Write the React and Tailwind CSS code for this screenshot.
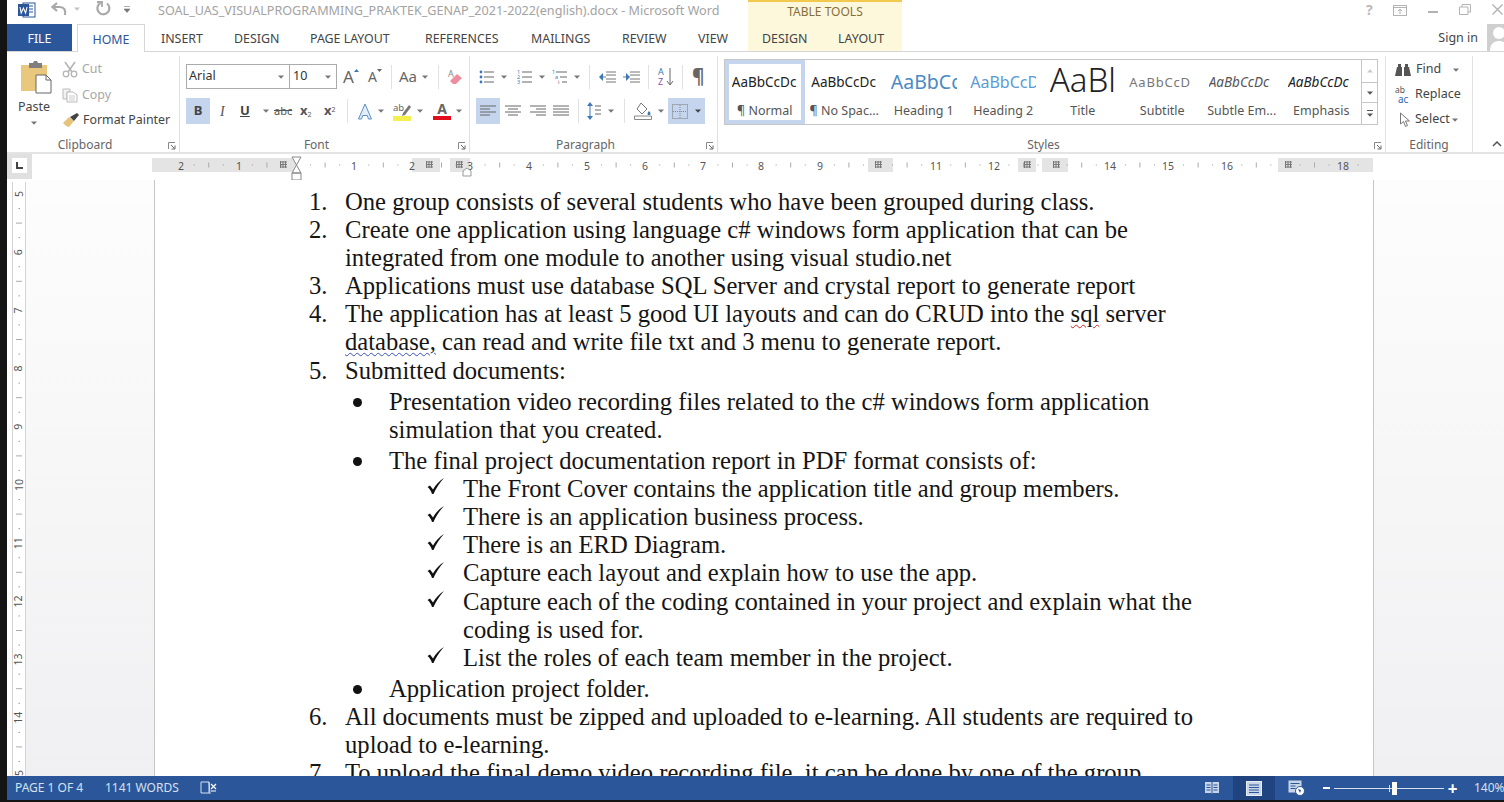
import React from "react";

const FONT = '"Noto Sans", "Open Sans", sans-serif';

function Caret({ className = "", color = "#777" }) {
  return (
    <svg width="6" height="4" viewBox="0 0 6 4" className={className}>
      <path d="M0 0.5h6L3 3.8z" fill={color} />
    </svg>
  );
}

function Sep({ className = "" }) {
  return <div className={`w-px h-[24px] bg-[#e1e1e1] shrink-0 ${className}`} />;
}

function Launcher() {
  return (
    <svg width="8" height="8" viewBox="0 0 8 8">
      <path d="M0.5 7V0.5H7" fill="none" stroke="#888" />
      <path d="M3 3l3.5 3.5M7 3.5V7H3.5" fill="none" stroke="#666" />
    </svg>
  );
}

function Lines({ rows, w = 15, color = "#666" }) {
  return (
    <svg width={w} height="14" viewBox={`0 0 ${w} 14`} className="block">
      {rows.map((r, i) => (
        <path key={i} d={`M${r[0]} ${r[2]}H${r[1]}`} stroke={color} strokeWidth="1" />
      ))}
    </svg>
  );
}

const TitleBar = () => (
  <div className="h-[24px] flex bg-white shrink-0">
    <div className="w-[741px] flex items-center h-[22px] shrink-0">
      <svg width="18" height="16" viewBox="0 0 18 16" className="ml-[11px] shrink-0 mt-[-3px]">
        <rect x="5" y="1" width="12" height="14" fill="#fff" stroke="#2b579a" />
        <path d="M11 4h4M11 7h4M11 10h4" stroke="#2b579a" />
        <rect x="0" y="2" width="11" height="12" fill="#2b579a" />
        <path d="M2 5l1.200 6L5.400 6l2.200 5L9 5" fill="none" stroke="#fff" strokeWidth="1.100" />
      </svg>
      <svg width="17" height="15" viewBox="0 0 17 15" className="ml-[15px] shrink-0 mt-[-4px]">
        <path d="M6 1L1.500 5 6 9" fill="none" stroke="#a9a9a9" strokeWidth="2.200" />
        <path d="M2 5h7c4 0 6 3 5 8" fill="none" stroke="#a9a9a9" strokeWidth="2.200" />
      </svg>
      <Caret className="ml-[6px] mt-[-4px]" color="#c4c4c4" />
      <svg width="16" height="16" viewBox="0 0 16 16" className="ml-[15px] shrink-0 mt-[-4px]">
        <path d="M12 2.500a6 6 0 1 1-6.500-.5" fill="none" stroke="#a9a9a9" strokeWidth="2.200" />
        <path d="M2 1h5v5" fill="none" stroke="#a9a9a9" strokeWidth="1.800" />
      </svg>
      <svg width="6" height="7" viewBox="0 0 6 7" className="ml-[13px] shrink-0 mt-[-3px]">
        <path d="M0 .5h6M0 3h6l-3 3.500z" fill="#777" stroke="#777" strokeWidth=".6" />
      </svg>
      <span className="ml-[28px] text-[12.600px] text-[#a3a3a3] whitespace-nowrap">
        SOAL_UAS_VISUALPROGRAMMING_PRAKTEK_GENAP_2021-2022(english).docx - Microsoft Word
      </span>
    </div>
    <div className="w-[154px] shrink-0 bg-[#fdf7dc] border-t-2 border-[#f2c94c] text-center text-[12px] leading-[20px] text-[#86703a]">
      TABLE TOOLS
    </div>
    <div className="flex-1 flex items-start relative h-[20px]">
      <span className="ml-[464px] mt-[1px] text-[14px] leading-[18px] font-bold text-[#b9b9b9]">?</span>
      <svg width="14" height="11" viewBox="0 0 14 11" className="ml-[20px] mt-[5px] shrink-0">
        <rect x=".5" y=".5" width="13" height="10" fill="none" stroke="#b3b3b3" />
        <path d="M.5 2.500h13M7 9V4.500M5 6l2-2 2 2" fill="none" stroke="#b3b3b3" />
      </svg>
      <div className="ml-[21px] mt-[11px] w-[10px] h-[1.500px] bg-[#b3b3b3]" />
      <svg width="12" height="11" viewBox="0 0 12 11" className="ml-[21px] mt-[4px] shrink-0">
        <path d="M.5 3h8.500v7.500h-8.500zM3 3V.5h8.500V8H9" fill="none" stroke="#b3b3b3" />
      </svg>
      <svg width="11" height="11" viewBox="0 0 11 11" className="ml-[21px] mt-[4px] shrink-0">
        <path d="M.5.5l10 10M10.500.5l-10 10" stroke="#b3b3b3" strokeWidth="1.400" />
      </svg>
    </div>
  </div>
);

const TabBar = () => (
  <div className="h-[28px] flex bg-white border-b border-[#d6d6d6] shrink-0 text-[12.400px] text-[#444] items-stretch relative">
    <div className="w-[65px] h-[27px] pt-[3px] bg-[#2b579a] text-white flex items-center justify-center shrink-0">FILE</div>
    <div className="ml-[5px] w-[68px] h-[28px] pt-[3px] bg-white border-x border-t border-[#d6d6d6] text-[#2b579a] flex items-center justify-center shrink-0 relative z-10">
      HOME
    </div>
    <div className="ml-[16px] w-[73px] pt-[3px] flex items-center shrink-0">INSERT</div>
    <div className="w-[76px] pt-[3px] flex items-center shrink-0">DESIGN</div>
    <div className="w-[115px] pt-[3px] flex items-center shrink-0">PAGE LAYOUT</div>
    <div className="w-[106px] pt-[3px] flex items-center shrink-0">REFERENCES</div>
    <div className="w-[91px] pt-[3px] flex items-center shrink-0">MAILINGS</div>
    <div className="w-[76px] pt-[3px] flex items-center shrink-0">REVIEW</div>
    <div className="w-[50px] pt-[3px] flex items-center shrink-0">VIEW</div>
    <div className="w-[154px] pt-[3px] flex items-center bg-[#fdf7dc] shrink-0">
      <span className="ml-[14px] w-[76px]">DESIGN</span>
      <span>LAYOUT</span>
    </div>
    <div className="flex-1 flex justify-end items-center">
      <span className="text-[12.500px] text-[#444] mr-[9px] pt-[2px]">Sign in</span>
      <svg width="17" height="27" viewBox="0 0 17 27" className="shrink-0">
        <rect width="17" height="27" fill="#cfcfcf" />
        <circle cx="12" cy="9" r="6" fill="#fff" />
        <path d="M3 27c0-8 5-10 9-10s9 2 9 10z" fill="#fff" />
      </svg>
    </div>
  </div>
);

const Group = ({ w, label, launcher, children, border = true }) => (
  <div className={`${w} shrink-0 flex flex-col relative ${border ? "border-r border-[#e1e1e1]" : ""} h-[96px] mt-[4px]`}>
    <div className="h-[82px] shrink-0 relative flex flex-col">{children}</div>
    <div className={`flex-1 text-[12px] leading-[15px] text-[#666] text-center mt-[-1px] ${launcher ? "pr-[16px]" : ""}`}>
      {label}
    </div>
    {launcher && (
      <div className="absolute right-[3px] bottom-[2px] leading-none flex">
        <Launcher />
      </div>
    )}
  </div>
);

const Clipboard = () => (
  <Group w="w-[173px]" label="Clipboard" launcher>
    <div className="flex pt-[4px] pl-[5px]">
      <div className="w-[44px] flex flex-col items-center shrink-0">
        <svg width="32" height="34" viewBox="0 0 32 34" className="ml-[4px]">
          <path d="M1 5h26v26H1z" fill="#e9c77d" />
          <path d="M9 3h4l1-2h3l1 2h4v5H9z" fill="#7f7f7f" />
          <path d="M16 15h10l5 5v13H16z" fill="#fff" stroke="#666" />
          <path d="M26 15v5h5" fill="none" stroke="#666" />
        </svg>
        <span className="text-[12.500px] leading-[16px] mt-[5px] text-[#444]">Paste</span>
        <Caret className="mt-[6px]" />
      </div>
      <div className="flex flex-col ml-[6px] mt-[-3px]">
        <div className="flex items-center h-[25.500px] text-[12.400px] text-[#a8a8a8]">
          <svg width="16" height="17" viewBox="0 0 16 17" className="shrink-0">
            <path d="M3 1l7 10M13 1L6 11" stroke="#b5b5b5" strokeWidth="1.600" />
            <circle cx="4" cy="13" r="2.800" fill="none" stroke="#b5b5b5" strokeWidth="1.300" />
            <circle cx="12" cy="13" r="2.800" fill="none" stroke="#b5b5b5" strokeWidth="1.300" />
          </svg>
          <span className="ml-[4px]">Cut</span>
        </div>
        <div className="flex items-center h-[25.500px] text-[12.400px] text-[#a8a8a8]">
          <svg width="16" height="15" viewBox="0 0 16 15" className="shrink-0">
            <path d="M1 1h7v3H5v7H1z" fill="#f2f2f2" stroke="#bbb" />
            <path d="M5 4h6l4 3v7H5z" fill="#fff" stroke="#bbb" />
            <path d="M7 8h6M7 10h6M7 12h6" stroke="#ccc" />
          </svg>
          <span className="ml-[4px]">Copy</span>
        </div>
        <div className="flex items-center h-[25.500px] text-[12.400px] text-[#444]">
          <svg width="18" height="15" viewBox="0 0 18 15" className="shrink-0">
            <path d="M1 10l6-6 5 4-5 6c-2 0-4-2-6-4z" fill="#e6c37a" />
            <path d="M8 4l4 4 5-6-2-2z" fill="#444" />
          </svg>
          <span className="ml-[3px]">Format Painter</span>
        </div>
      </div>
    </div>
  </Group>
);

const Font = () => (
  <Group w="w-[290px]" label="Font" launcher>
    <div className="flex items-center pl-[6px] mt-[8px] h-[25px]">
      <div className="w-[104px] h-[25px] border border-[#ababab] text-[12.500px] text-[#333] flex items-center justify-between pl-[2px] pr-[5px] shrink-0">
        <span>Arial</span>
        <Caret />
      </div>
      <div className="w-[47px] h-[25px] border border-l-0 border-[#ababab] text-[12.500px] text-[#333] flex items-center justify-between pl-[3px] pr-[5px] shrink-0">
        <span>10</span>
        <Caret />
      </div>
      <div className="ml-[6px] w-[25px] flex items-start text-[17px] leading-[20px] text-[#666] relative">
        A
        <svg width="5" height="3" viewBox="0 0 5 3" className="mt-[2px]"><path d="M0 3h5L2.500 0z" fill="#3b78b5" /></svg>
      </div>
      <div className="w-[22px] flex items-start text-[14px] leading-[20px] text-[#666]">
        A
        <svg width="5" height="3" viewBox="0 0 5 3" className="mt-[2px]"><path d="M0 0h5L2.500 3z" fill="#666" /></svg>
      </div>
      <Sep className="ml-[1px]" />
      <span className="ml-[7px] text-[15px] text-[#666]">Aa</span>
      <Caret className="ml-[5px]" />
      <Sep className="ml-[10px]" />
      <svg width="16" height="16" viewBox="0 0 16 16" className="ml-[8px] shrink-0">
        <text x="1" y="8" fontSize="9" fill="#888" fontFamily={FONT}>A</text>
        <path d="M3 12l7-7 5 4-6 6H6z" fill="#ef8da0" />
      </svg>
    </div>
    <div className="flex items-center pl-[6px] mt-[9px] h-[26px]">
      <div className="w-[24px] h-[26px] bg-[#c5d5ee] flex items-center justify-center text-[13px] font-bold text-[#444] shrink-0">B</div>
      <span className="ml-[10px] w-[16px] text-[14px] italic text-[#555]" style={{ fontFamily: '"Liberation Serif", serif' }}>I</span>
      <span className="ml-[4px] w-[13px] text-[13px] font-bold underline text-[#444]">U</span>
      <Caret className="ml-[10px]" />
      <span className="ml-[5px] w-[26px] text-[11px] text-[#555] line-through">abc</span>
      <span className="w-[24px] text-[13px] font-bold text-[#555] whitespace-nowrap">x<sub className="text-[7px] font-normal">2</sub></span>
      <span className="w-[24px] text-[13px] font-bold text-[#555] whitespace-nowrap">x<sup className="text-[7px] font-normal">2</sup></span>
      <Sep className="ml-[-1px]" />
      <svg width="16" height="17" viewBox="0 0 16 17" className="ml-[9px] shrink-0">
        <path d="M8 1L1.500 16h3l1.200-3.500h4.600L11.500 16h3z" fill="#e4eef8" stroke="#5b8fc7" />
      </svg>
      <Caret className="ml-[5px]" />
      <svg width="18" height="19" viewBox="0 0 18 19" className="ml-[9px] shrink-0">
        <text x="0" y="9" fontSize="9.500" fill="#666" fontFamily={FONT}>ab</text>
        <path d="M10 11l6-8 2 2-6 8-3 1z" fill="#777" />
        <rect x="0" y="14" width="18" height="5" fill="#f4ee4e" />
      </svg>
      <Caret className="ml-[6px]" />
      <div className="ml-[10px] w-[18px] flex flex-col items-center shrink-0">
        <span className="text-[14px] leading-[13px] text-[#666] font-bold">A</span>
        <div className="w-[18px] h-[4px] mt-[1px] bg-[#e00d1c]" />
      </div>
      <Caret className="ml-[5px]" />
    </div>
  </Group>
);

const NumList = () => (
  <svg width="15" height="16" viewBox="0 0 15 16" className="block">
    <text x="0" y="5" fontSize="5.500" fill="#3b78b5" fontFamily={FONT}>1</text>
    <text x="0" y="10" fontSize="5.500" fill="#3b78b5" fontFamily={FONT}>2</text>
    <text x="0" y="15" fontSize="5.500" fill="#3b78b5" fontFamily={FONT}>3</text>
    <path d="M5 3h10M5 8h10M5 13h10" stroke="#666" />
  </svg>
);
const BulList = () => (
  <svg width="15" height="16" viewBox="0 0 15 16" className="block">
    <circle cx="2" cy="3" r="1.400" fill="#3b78b5" />
    <circle cx="2" cy="8" r="1.400" fill="#3b78b5" />
    <circle cx="2" cy="13" r="1.400" fill="#3b78b5" />
    <path d="M5 3h10M5 8h10M5 13h10" stroke="#666" />
  </svg>
);
const MultiList = () => (
  <svg width="15" height="16" viewBox="0 0 15 16" className="block">
    <text x="0" y="5" fontSize="5.500" fill="#3b78b5" fontFamily={FONT}>1</text>
    <text x="3" y="10" fontSize="5.500" fill="#3b78b5" fontFamily={FONT}>a</text>
    <text x="6" y="15" fontSize="5.500" fill="#666" fontFamily={FONT}>i</text>
    <path d="M4 3h11M8 8h7M10 13h5" stroke="#666" />
  </svg>
);

const Para = () => (
  <Group w="w-[248px]" label="Paragraph" launcher>
    <div className="flex items-center pl-[9px] mt-[8px] h-[25px]">
      <BulList />
      <Caret className="ml-[7px]" />
      <div className="ml-[10px]"><NumList /></div>
      <Caret className="ml-[7px]" />
      <div className="ml-[7px]"><MultiList /></div>
      <Caret className="ml-[7px]" />
      <Sep className="ml-[9px]" />
      <svg width="18" height="14" viewBox="0 0 18 14" className="ml-[8px] shrink-0">
        <path d="M8 2h10M8 5h10M8 9h10M8 12h10M8 7H2" stroke="#777" />
        <path d="M5 3L1 7l4 4z" fill="#3b78b5" />
      </svg>
      <svg width="18" height="14" viewBox="0 0 18 14" className="ml-[6px] shrink-0">
        <path d="M8 2h10M8 5h10M8 9h10M8 12h10M1 7h5" stroke="#777" />
        <path d="M4 3l4 4-4 4z" fill="#3b78b5" />
      </svg>
      <Sep className="ml-[8px]" />
      <svg width="17" height="20" viewBox="0 0 17 20" className="ml-[9px] shrink-0">
        <text x="0" y="8" fontSize="9" fill="#3b78b5" fontFamily={FONT}>A</text>
        <text x="0" y="18" fontSize="9" fill="#8a52a6" fontFamily={FONT}>Z</text>
        <path d="M12 1v16M9 14l3 4 3-4" fill="none" stroke="#666" />
      </svg>
      <Sep className="ml-[7px]" />
      <span className="ml-[9px] text-[19px] font-bold text-[#666] leading-none">¶</span>
    </div>
    <div className="flex items-center pl-[6px] mt-[9px] h-[26px]">
      <div className="w-[24px] h-[26px] bg-[#c5d5ee] flex items-center justify-center shrink-0">
        <Lines w={16} rows={[[0, 16, 2], [0, 10, 5], [0, 16, 8], [0, 10, 11]]} />
      </div>
      <div className="ml-[5px]"><Lines w={16} rows={[[0, 16, 2], [3, 13, 5], [0, 16, 8], [3, 13, 11]]} /></div>
      <div className="ml-[7px]"><Lines w={18} rows={[[2, 18, 2], [8, 18, 5], [2, 18, 8], [8, 18, 11]]} /></div>
      <div className="ml-[6px]"><Lines w={18} rows={[[1, 17, 2], [1, 17, 5], [1, 17, 8], [1, 17, 11]]} /></div>
      <Sep className="ml-[8px]" />
      <svg width="14" height="20" viewBox="0 0 14 20" className="ml-[8px] shrink-0">
        <path d="M3 3v14" stroke="#3b78b5" />
        <path d="M0 5l3-4 3 4zM0 15l3 4 3-4z" fill="#3b78b5" />
        <path d="M8 5h6M8 9h6M8 13h6" stroke="#666" />
      </svg>
      <Caret className="ml-[7px]" />
      <Sep className="ml-[10px]" />
      <svg width="18" height="18" viewBox="0 0 18 18" className="ml-[9px] shrink-0">
        <path d="M7 1l6 6-5 5-5-5z" fill="#fff" stroke="#777" />
        <path d="M15 9c2 2 2 4 0 4s-2-2 0-4z" fill="#3b78b5" />
        <path d="M.5 14h17v3.500H.5z" fill="#fff" stroke="#888" />
      </svg>
      <Caret className="ml-[6px]" />
      <div className="ml-[4px] w-[37px] h-[26px] bg-[#c5d5ee] flex items-center shrink-0">
        <svg width="16" height="15" viewBox="0 0 16 15" className="ml-[4px] shrink-0">
          <rect x=".5" y=".5" width="15" height="14" fill="none" stroke="#777" strokeDasharray="1 1" />
          <path d="M8 1v13M1 7.500h14" stroke="#888" strokeDasharray="1 1" />
        </svg>
        <Caret className="ml-[7px]" color="#444" />
      </div>
    </div>
  </Group>
);

const styles = [
  ["AaBbCcDc", "¶ Normal", "leading-[36px] text-[13.500px] text-[#222]", true],
  ["AaBbCcDc", "¶ No Spac...", "leading-[36px] text-[13.500px] text-[#222]"],
  ["AaBbCc", "Heading 1", "leading-[36px] text-[19.500px] text-[#4b8bc4]"],
  ["AaBbCcD", "Heading 2", "leading-[36px] text-[16px] text-[#5b9bd5]"],
  ["AaBl", "Title", "leading-[32px] text-[33px] text-[#222] font-light"],
  ["AaBbCcD", "Subtitle", "leading-[36px] text-[13px] tracking-[0.8px] text-[#777]"],
  ["AaBbCcDc", "Subtle Em...", "leading-[36px] text-[13.500px] italic text-[#555]"],
  ["AaBbCcDc", "Emphasis", "leading-[36px] text-[13.500px] italic text-[#222]"],
];

const Styles = () => (
  <Group w="w-[668px]" label="Styles" launcher>
    <div className="mt-[3px] ml-[6px] w-[654px] h-[66px] border border-[#c6c6c6] flex">
      {styles.map(([p, l, c, sel], i) => (
        <div
          key={i}
          className={`w-[79.500px] shrink-0 h-[64px] flex flex-col items-center ${sel ? "border-[4px] border-[#c5d5ee]" : "border-[4px] border-transparent"}`}
        >
          <div className={`h-[38px] w-[66px] overflow-hidden whitespace-nowrap ${c}`}>{p}</div>
          <div className="text-[12.500px] leading-[16px] mt-[1px] text-[#555] whitespace-nowrap">{l}</div>
        </div>
      ))}
      <div className="flex-1 border-l border-[#c6c6c6] flex flex-col">
        <div className="h-[23px] flex items-center justify-center border-b border-[#c6c6c6]">
          <svg width="6" height="4" viewBox="0 0 6 4"><path d="M0 3.500h6L3 .2z" fill="#c9c9c9" /></svg>
        </div>
        <div className="h-[20px] flex items-center justify-center border-b border-[#c6c6c6]"><Caret color="#555" /></div>
        <div className="flex-1 flex flex-col items-center justify-center gap-[2px]">
          <div className="w-[6px] h-px bg-[#555]" />
          <Caret color="#555" />
        </div>
      </div>
    </div>
  </Group>
);

const Editing = () => (
  <Group w="w-[87px]" label="Editing">
    <div className="flex flex-col pl-[8px] text-[12.500px] text-[#444]">
      <div className="flex items-center h-[25px] mt-[1px]">
        <svg width="18" height="15" viewBox="0 0 18 15" className="shrink-0">
          <path d="M1 14l2-9h5v9zM10 14V5h5l2 9z" fill="#555" />
          <path d="M4 2h3v3H4zM11 2h3v3h-3z" fill="#555" />
        </svg>
        <span className="ml-[4px]">Find</span>
        <Caret className="ml-[12px]" />
      </div>
      <div className="flex items-center h-[25px]">
        <svg width="18" height="18" viewBox="0 0 18 18" className="shrink-0">
          <text x="1" y="7" fontSize="8.500" fill="#555" fontFamily={FONT}>ab</text>
          <text x="4" y="17" fontSize="10" fill="#2b6cb0" fontFamily={FONT}>ac</text>
        </svg>
        <span className="ml-[3px]">Replace</span>
      </div>
      <div className="flex items-center h-[25px]">
        <svg width="13" height="16" viewBox="0 0 13 16" className="ml-[5px] shrink-0">
          <path d="M1.500 1v11l3-2.500 2 5 2-1-2-4.500h4z" fill="#fff" stroke="#777" />
        </svg>
        <span className="ml-[3px]">Select</span>
        <Caret className="ml-[2px]" />
      </div>
    </div>
  </Group>
);

const Ribbon = () => (
  <div className="h-[102px] flex bg-white border-b-2 border-[#e4e4e4] shrink-0 relative">
    <Clipboard />
    <Font />
    <Para />
    <Styles />
    <Editing />
    <svg width="10" height="6" viewBox="0 0 10 6" className="ml-[19px] mt-[89px] shrink-0">
      <path d="M1 5l4-4 4 4" fill="none" stroke="#555" strokeWidth="1.500" />
    </svg>
  </div>
);

const hNums = [
  [181, "2"], [239, "1"], [354, "1"], [412, "2"], [470, "3"], [529, "4"], [587, "5"], [645, "6"], [703, "7"],
  [761, "8"], [820, "9"], [936, "11"], [994, "12"], [1110, "14"], [1168, "15"], [1227, "16"], [1343, "18"],
];
const hMarks = [283, 429, 459, 878, 1027, 1056, 1288];

const HRuler = () => {
  const ticks = [];
  for (let i = -8; i < 74; i++) {
    if (i % 4 === 0) continue;
    const x = 296 + i * 14.55 - 152;
    if (x < 4 || x > 1218) continue;
    ticks.push(
      i % 2 === 0 ? (
        <path key={i} d={`M${x} 8.500v5`} stroke="#aaa" />
      ) : (
        <path key={i} d={`M${x} 10.500v1`} stroke="#999" />
      )
    );
  }
  return (
    <svg width="1222" height="26" viewBox="0 0 1222 26" className="shrink-0 block">
      <rect x="0" y="4" width="1221" height="14" fill="#e4e4e4" />
      <rect x="144" y="4" width="116" height="14" fill="#fff" />
      <rect x="288" y="4" width="10" height="14" fill="#fff" />
      <rect x="318" y="4" width="398" height="14" fill="#fff" />
      <rect x="741" y="4" width="125" height="14" fill="#fff" />
      <rect x="884" y="4" width="6" height="14" fill="#fff" />
      <rect x="916" y="4" width="210" height="14" fill="#fff" />
      {ticks}
      {hNums.map(([x, t]) => (
        <text key={x} x={x - 152} y="16" textAnchor="middle" fontSize="10.500" fill="#555" fontFamily={FONT}>{t}</text>
      ))}
      {hMarks.map((x) => (
        <g key={x} stroke="#777">
          <path d={`M${x - 152 - 3} 8h7M${x - 152 - 3} 10.500h7M${x - 152 - 3} 13h7`} />
          <path d={`M${x - 152 - 2.500} 7v7M${x - 152} 7v7M${x - 152 + 2.500} 7v7`} />
        </g>
      ))}
      <path d="M140 3h9l-4.500 8zM140 19l4.500-8 4.500 8zM140 19h9v7h-9z" fill="#fff" stroke="#888" />
      <path d="M311 22v-5l4-3 4 3v5z" fill="#fff" stroke="#999" />
    </svg>
  );
};

const RulerRow = () => (
  <div className="h-[26px] flex bg-white shrink-0">
    <div className="w-[25px] h-[25px] bg-[#e0e0e0] flex items-center justify-center shrink-0">
      <div className="w-[15px] h-[15px] bg-white flex items-center justify-center mt-[-2px]">
        <svg width="7" height="7" viewBox="0 0 7 7"><path d="M1 0v6h6" fill="none" stroke="#444" strokeWidth="2" /></svg>
      </div>
    </div>
    <div className="w-[120px] shrink-0" />
    <HRuler />
  </div>
);

const VRuler = () => {
  const nums = [5, 6, 7, 8, 9, 10, 11, 12, 13, 14, 15];
  const top = 194 - 180;
  const p = 58.2;
  const ticks = [];
  for (let i = 0; i < 44; i++) {
    if (i % 4 === 0) continue;
    const y = top + (i * p) / 4;
    ticks.push(
      i % 2 === 0 ? (
        <path key={i} d={`M4 ${y}h6`} stroke="#aaa" />
      ) : (
        <path key={i} d={`M6.500 ${y}h1.500`} stroke="#999" />
      )
    );
  }
  return (
    <svg width="14" height="596" viewBox="0 0 14 596" className="shrink-0 block">
      <rect width="14" height="596" fill="#fff" />
      <path d="M.5 2V596M13.500 2V596" stroke="#d4d4d4" />
      {ticks}
      {nums.map((n, i) => {
        const y = top + i * p;
        return (
          <text key={n} x="7" y={y + 3.500} transform={`rotate(-90 7 ${y})`} textAnchor="middle" fontSize="10.500" fill="#555" fontFamily={FONT}>
            {n}
          </text>
        );
      })}
    </svg>
  );
};

const Num = ({ n, children }) => (
  <div className="flex">
    <span className="w-[36px] shrink-0">{n}.</span>
    <div>{children}</div>
  </div>
);
const Bul = ({ children }) => (
  <div className="flex mt-[2.800px] pl-[44px]">
    <span className="w-[36px] shrink-0 flex pt-[10px]">
      <span className="w-[9px] h-[9px] rounded-full bg-[#111]" />
    </span>
    <div>{children}</div>
  </div>
);
const Chk = ({ children }) => (
  <div className="flex pl-[118px]">
    <span className="w-[36px] shrink-0 pt-[3px]">
      <svg width="17" height="16" viewBox="0 0 17 16" className="block">
        <path d="M.5 9L3 7.500 6 11.500C9 6 13 2.500 17 0 12.500 5 9 10 6.500 16H5C4 13 2.500 10.500.5 9z" fill="#111" />
      </svg>
    </span>
    <div>{children}</div>
  </div>
);

const Page = () => (
  <div
    className="w-[1220px] h-[596px] bg-white border-x border-[#c6c6c6] pt-[7.500px] pl-[154px] overflow-hidden shrink-0"
    style={{ fontFamily: '"Liberation Serif", serif' }}
  >
    <div className="w-[896px] text-[24.630px] leading-[28.170px] text-[#151515]">
      <Num n="1">One group consists of several students who have been grouped during class.</Num>
      <Num n="2">Create one application using language c# windows form application that can be integrated from one module to another using visual studio.net</Num>
      <Num n="3">Applications must use database SQL Server and crystal report to generate report</Num>
      <Num n="4">
        The application has at least 5 good UI layouts and can do CRUD into the{" "}
        <span className="underline decoration-wavy decoration-[#d02020] decoration-1 underline-offset-2">sql</span> server{" "}
        <span className="underline decoration-wavy decoration-[#3a4fc0] decoration-1 underline-offset-2">database,</span> can read and write file txt and 3 menu to generate report.
      </Num>
      <Num n="5">Submitted documents:</Num>
      <Bul>Presentation video recording files related to the c# windows form application simulation that you created.</Bul>
      <Bul>The final project documentation report in PDF format consists of:</Bul>
      <Chk>The Front Cover contains the application title and group members.</Chk>
      <Chk>There is an application business process.</Chk>
      <Chk>There is an ERD Diagram.</Chk>
      <Chk>Capture each layout and explain how to use the app.</Chk>
      <Chk>Capture each of the coding contained in your project and explain what the coding is used for.</Chk>
      <Chk>List the roles of each team member in the project.</Chk>
      <Bul>Application project folder.</Bul>
      <Num n="6">All documents must be zipped and uploaded to e-learning. All students are required to upload to e-learning.</Num>
      <Num n="7">To upload the final demo video recording file, it can be done by one of the group members.</Num>
    </div>
  </div>
);

const DocArea = () => (
  <div className="h-[596px] flex shrink-0 bg-linear-to-b from-[#fdfdfd] to-[#f0f0f2]">
    <div className="w-[5px] shrink-0 bg-white" />
    <VRuler />
    <div className="w-[128px] shrink-0" />
    <Page />
  </div>
);

const StatusBar = () => (
  <div className="h-[24px] bg-[#2b579a] flex items-center text-[12px] text-[#d6e0ee] shrink-0">
    <span className="ml-[8px] w-[90px] shrink-0">PAGE 1 OF 4</span>
    <span className="w-[95px] shrink-0">1141 WORDS</span>
    <svg width="17" height="16" viewBox="0 0 17 16" className="shrink-0">
      <path d="M9 2H1v11h8zM9 2l1 12" fill="none" stroke="#d6e0ee" />
      <path d="M11 4l5 5M16 4l-5 5M11 11h5" stroke="#fff" strokeWidth="1.200" />
    </svg>
    <div className="flex-1" />
    <svg width="16" height="14" viewBox="0 0 16 14" className="shrink-0">
      <path d="M1 1h6l1 1 1-1h6v11H9l-1 1-1-1H1z" fill="#c8d5e8" />
      <path d="M8 2v11M2.500 4h4M2.500 6.500h4M2.500 9h4M9.500 4h4M9.500 6.500h4M9.500 9h4" stroke="#2b579a" />
    </svg>
    <div className="ml-[13px] w-[42px] h-[24px] bg-[#1f4480] flex items-center justify-center shrink-0">
      <svg width="16" height="15" viewBox="0 0 16 15">
        <rect x=".5" y=".5" width="15" height="14" fill="#c8d5e8" stroke="#e6edf6" />
        <path d="M3 4h10M3 6.500h10M3 9h10M3 11.500h10" stroke="#2b579a" />
      </svg>
    </div>
    <svg width="17" height="16" viewBox="0 0 17 16" className="ml-[13px] shrink-0">
      <rect x=".5" y=".5" width="13" height="12" fill="#c8d5e8" />
      <path d="M2.500 3.500h9M2.500 6h5M2.500 8.500h5" stroke="#2b579a" />
      <circle cx="12" cy="11" r="4.500" fill="#fff" stroke="#2b579a" />
      <path d="M10 9l3 1-1 3z" fill="#2b579a" />
    </svg>
    <div className="ml-[18px] w-[7px] h-[2px] bg-white shrink-0" />
    <div className="ml-[4px] w-[110px] h-[1px] bg-[#d6e0ee] shrink-0 relative">
      <div className="absolute left-[58px] top-[-6px] w-[5px] h-[13px] bg-white" />
      <div className="absolute left-[55px] top-[-3px] w-px h-[7px] bg-[#d6e0ee]" />
    </div>
    <div className="ml-[4px] text-white text-[17px] leading-none font-bold w-[9px] shrink-0 flex items-center justify-center">+</div>
    <span className="ml-[17px] w-[30px] shrink-0 overflow-hidden whitespace-nowrap">140%</span>
  </div>
);

export default function App() {
  return (
    <div className="w-[1504px] h-[802px] bg-[#141414] overflow-hidden pl-[7px]" style={{ fontFamily: FONT }}>
      <TitleBar />
      <TabBar />
      <Ribbon />
      <RulerRow />
      <DocArea />
      <StatusBar />
    </div>
  );
}
